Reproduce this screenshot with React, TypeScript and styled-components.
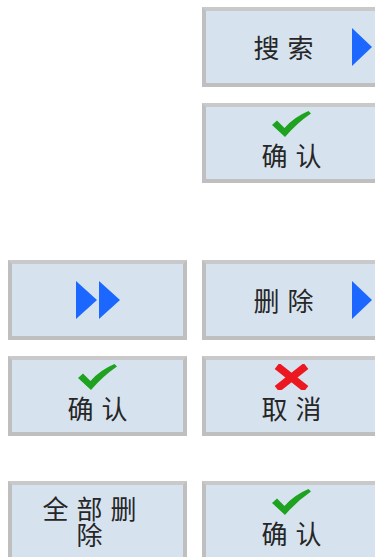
import styled, { createGlobalStyle } from "styled-components";

const GlobalStyle = createGlobalStyle`
  html, body {
    margin: 0;
    padding: 0;
    background: #ffffff;
    overflow: hidden;
  }
  body {
    font-family: "Noto Sans CJK SC", "Noto Sans", sans-serif;
  }
`;

const Page = styled.div`
  width: 375px;
  height: 557px;
  overflow: hidden;
  padding-left: 8px;
  box-sizing: border-box;
`;

const Section = styled.section<{ $top: number }>`
  display: grid;
  grid-template-columns: 179px 179px;
  grid-auto-rows: 80px;
  column-gap: 15px;
  row-gap: 16px;
  margin-top: ${(p) => p.$top}px;
`;

const Key = styled.div`
  position: relative;
  box-sizing: border-box;
  height: 80px;
  background: #d6e3ef;
  border: 4px solid #bfbfbf;
  border-top-color: #c9c9c9;
  display: flex;
  flex-direction: column;
  align-items: center;
  justify-content: center;
  color: #262626;
`;

const Blank = styled.div``;

const Content = styled.div<{ $shift?: number; $drop?: number }>`
  display: flex;
  flex-direction: column;
  align-items: center;
  gap: 5px;
  padding-right: ${(p) => p.$shift ?? 0}px;
  padding-bottom: ${(p) => p.$drop ?? 0}px;
`;

const Lines = styled.div`
  display: flex;
  flex-direction: column;
  align-items: center;
`;

const Label = styled.span`
  font-size: 26px;
  line-height: 26px;
  letter-spacing: 8px;
  margin-right: -8px;
  text-align: center;
  white-space: nowrap;
`;

const Arrow = styled.div`
  position: absolute;
  right: 5px;
  top: 50%;
  transform: translateY(-50%);
  width: 0;
  height: 0;
  border-top: 19.5px solid transparent;
  border-bottom: 19.5px solid transparent;
  border-left: 20px solid #1c67ff;
`;

const DoubleArrow = styled.div`
  display: flex;
  gap: 2px;
`;

const Tri = styled.div`
  width: 0;
  height: 0;
  border-top: 19px solid transparent;
  border-bottom: 19px solid transparent;
  border-left: 21px solid #1c67ff;
`;

function Check() {
  return (
    <svg width="39" height="26" viewBox="0 0 39 26">
      <path
        d="M0 14 L5 9.5 L12.5 17 Q22 6 36.5 0 L39 2.5 Q25 12 13 26 Z"
        fill="#1fa21f"
      />
    </svg>
  );
}

function Cross() {
  return (
    <svg width="39" height="26" viewBox="0 0 39 26">
      <g stroke="#ec1820" strokeWidth="7.5">
        <line x1="5" y1="2" x2="34" y2="25" />
        <line x1="34" y1="2" x2="5" y2="25" />
      </g>
    </svg>
  );
}

function TextKey({ lines, arrow }: { lines: string[]; arrow?: boolean }) {
  return (
    <Key>
      <Content $shift={16}>
        <Lines>
          {lines.map((l) => (
            <Label key={l}>{l}</Label>
          ))}
        </Lines>
      </Content>
      {arrow && <Arrow />}
    </Key>
  );
}

function IconKey({ icon, label }: { icon: "ok" | "cancel"; label: string }) {
  return (
    <Key>
      <Content $drop={7}>
        {icon === "ok" ? <Check /> : <Cross />}
        <Label>{label}</Label>
      </Content>
    </Key>
  );
}

export default function App() {
  return (
    <Page>
      <GlobalStyle />
      <Section $top={7}>
        <Blank />
        <TextKey lines={["搜索"]} arrow />
        <Blank />
        <IconKey icon="ok" label="确认" />
      </Section>
      <Section $top={77}>
        <Key>
          <DoubleArrow>
            <Tri />
            <Tri />
          </DoubleArrow>
        </Key>
        <TextKey lines={["删除"]} arrow />
        <IconKey icon="ok" label="确认" />
        <IconKey icon="cancel" label="取消" />
      </Section>
      <Section $top={45}>
        <TextKey lines={["全部删", "除"]} />
        <IconKey icon="ok" label="确认" />
      </Section>
    </Page>
  );
}
